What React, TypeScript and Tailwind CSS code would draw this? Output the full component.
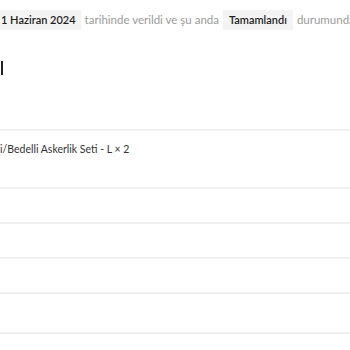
import React from "react";

export default function App() {
  return (
    <div className="w-[350px] h-[350px] bg-white overflow-hidden font-['Lato',sans-serif] text-[#222]">
      <div className="flex items-center h-[20px] mt-[10px] text-[11.5px] whitespace-nowrap">
        <span className="bg-[#f4f4f4] h-[20px] flex items-center pl-[1px] pr-[5px] font-semibold text-[#1f1f1f] text-[11px]">1 Haziran 2024</span>
        <span className="text-[#9a9a9a] mx-[4px]">tarihinde verildi ve şu anda</span>
        <span className="bg-[#f4f4f4] h-[20px] flex items-center px-[6px] font-semibold text-[#1f1f1f] text-[11px]">Tamamlandı</span>
        <span className="text-[#9a9a9a] ml-[4px]">durumunda</span>
      </div>
      <div className="mt-[26px] h-[24px] flex items-center">
        <span className="block w-[2px] h-[14px] bg-[#222] ml-[1px]" />
      </div>
      <div className="mt-[49px] border-t-2 border-[#f0f0f0] h-[58px] pt-[4px]">
        <span className="text-[10.5px] text-[#333]">i/Bedelli Askerlik Seti - L × 2</span>
      </div>
      <div className="border-t-2 border-[#f0f0f0] h-[35px]" />
      <div className="border-t-2 border-[#f0f0f0] h-[35px]" />
      <div className="border-t-2 border-[#f0f0f0] h-[35px]" />
      <div className="border-t-2 border-[#f0f0f0] h-[40px]" />
      <div className="border-t-2 border-[#f0f0f0] h-[20px]" />
    </div>
  );
}
